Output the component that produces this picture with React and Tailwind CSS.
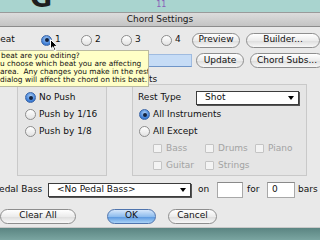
import React from "react";

const F = { fontFamily: '"DejaVu Sans", sans-serif' };

function Radio({ on }) {
  return on ? (
    <span className="w-[11px] h-[11px] rounded-full border border-[#3d67a8] bg-[radial-gradient(circle_at_50%_35%,#a9cdf5,#3a7bd5_70%,#2a5fb0)] flex items-center justify-center shrink-0">
      <span className="w-[4px] h-[4px] rounded-full bg-[#13233f]" />
    </span>
  ) : (
    <span className="w-[11px] h-[11px] rounded-full border border-[#8d8d8d] bg-[linear-gradient(#ffffff,#e2e2e2)] shrink-0" />
  );
}

function Check() {
  return <span className="w-[9px] h-[9px] rounded-[1px] border border-[#c4c4c4] bg-[#f3f3f3] shrink-0" />;
}

function Btn({ children, w, blue }) {
  return (
    <div
      className={
        "h-[15px] rounded-full flex items-center justify-center shrink-0 text-[9px] text-[#111] " +
        (blue
          ? "border border-[#4f74ad] bg-[linear-gradient(#d5e7fb,#8fbdee_50%,#5d9ae0_55%,#a9d2f7)]"
          : "border border-[#8e8e8e] bg-[linear-gradient(#ffffff,#ececec_50%,#dedede_55%,#f8f8f8)]")
      }
      style={{ width: w }}
    >
      {children}
    </div>
  );
}

function Select({ w, children }) {
  return (
    <div
      className="h-[14px] bg-white border border-[#3c3c3c] shadow-[1px_1px_0_#555] flex items-center justify-between pl-[8px] pr-[4px] text-[9px] text-[#111] shrink-0"
      style={{ width: w }}
    >
      <span>{children}</span>
      <span className="w-0 h-0 border-l-[3.5px] border-r-[3.5px] border-t-[4px] border-l-transparent border-r-transparent border-t-black" />
    </div>
  );
}

export default function App() {
  return (
    <div className="w-[320px] h-[240px] overflow-hidden relative flex flex-col bg-[#e9e9e9]" style={F}>
      {/* background app strip */}
      <div className="h-[12px] bg-[#a9d4cf] flex overflow-hidden shrink-0">
        <span className="ml-[30px] -mt-[16px] text-[27px] font-semibold leading-none text-[#1e1e1e]">G</span>
        <span className="ml-[104px] mt-[1px] text-[8px] leading-none text-[#8a5db8]">11</span>
      </div>
      {/* title bar */}
      <div className="h-[15px] shrink-0 bg-[linear-gradient(#dcdcdc,#c4c4c4)] border-t border-[#9a9a9a] border-b border-b-[#8c8c8c] flex items-center justify-center text-[9px] text-[#1a1a1a]">
        Chord Settings
      </div>
      {/* body */}
      <div className="flex-1 flex flex-col pt-[6px] text-[9px] text-[#111]">
        {/* row 1 */}
        <div className="flex items-center h-[14px]">
          <span className="w-[51px] -ml-[6px]">Beat</span>
          {["1", "2", "3", "4"].map((n, i) => (
            <div key={n} className="flex items-center gap-[3px] shrink-0" style={{ width: i === 3 ? 31 : 40 }}>
              <Radio on={i === 0} />
              <span>{n}</span>
            </div>
          ))}
          <Btn w={48}>Preview</Btn>
          <div className="w-[6px] shrink-0" />
          <Btn w={74}>Builder...</Btn>
        </div>
        {/* row 2 */}
        <div className="flex items-center h-[15px] mt-[6px]">
          <div className="ml-[45px] w-[147px] h-[13px] bg-[#c6dcf6] border border-[#9fbbe0] border-b-[#6f95c8] shrink-0" />
          <div className="w-[4px] shrink-0" />
          <Btn w={48}>Update</Btn>
          <div className="w-[6px] shrink-0" />
          <Btn w={74}>Chord Subs...</Btn>
        </div>
        {/* group boxes */}
        <div className="flex mt-[6px]">
          <div className="ml-[17px] w-[90px] flex flex-col">
            <div className="h-[10px]" />
            <div className="h-[92px] border border-[#c9c9c9] bg-[#e5e5e5] pt-[4px] pl-[7px] flex flex-col">
              {["No Push", "Push by 1/16", "Push by 1/8"].map((t, i) => (
                <div key={t} className="h-[17px] flex items-center gap-[3px]">
                  <Radio on={i === 0} />
                  <span>{t}</span>
                </div>
              ))}
            </div>
          </div>
          <div className="ml-[25px] w-[175px] flex flex-col">
            <div className="h-[10px] pl-[17px] leading-[10px]">ts</div>
            <div className="h-[92px] border border-[#c9c9c9] bg-[#e5e5e5] pt-[4px] pl-[6px] flex flex-col">
              <div className="h-[17px] flex items-center">
                <span className="w-[58px] -ml-[1px]">Rest Type</span>
                <Select w={103}>Shot</Select>
              </div>
              <div className="h-[17px] flex items-center gap-[3px]">
                <Radio on />
                <span>All Instruments</span>
              </div>
              <div className="h-[17px] flex items-center gap-[3px]">
                <Radio />
                <span>All Except</span>
              </div>
              <div className="h-[17px] flex items-center pl-[14px] text-[#a3a3a3]">
                <div className="w-[52px] flex items-center gap-[4px]"><Check /><span>Bass</span></div>
                <div className="w-[50px] flex items-center gap-[4px]"><Check /><span>Drums</span></div>
                <div className="flex items-center gap-[4px]"><Check /><span>Piano</span></div>
              </div>
              <div className="h-[17px] flex items-center pl-[14px] text-[#a3a3a3]">
                <div className="w-[52px] flex items-center gap-[4px]"><Check /><span>Guitar</span></div>
                <div className="flex items-center gap-[4px]"><Check /><span>Strings</span></div>
              </div>
            </div>
          </div>
        </div>
        {/* pedal bass row */}
        <div className="flex items-center h-[16px] mt-[6px]">
          <span className="w-[54px] -ml-[6px] shrink-0">Pedal Bass</span>
          <Select w={143}>&lt;No Pedal Bass&gt;</Select>
          <span className="ml-[7px] w-[19px] shrink-0">on</span>
          <div className="w-[26px] h-[16px] bg-white border border-[#a8a8a8] border-t-[#8a8a8a] shrink-0" />
          <span className="ml-[4px] w-[20px] shrink-0">for</span>
          <div className="w-[28px] h-[16px] bg-white border border-[#a8a8a8] border-t-[#8a8a8a] pl-[4px] flex items-center shrink-0">0</div>
          <span className="ml-[3px]">bars</span>
        </div>
        {/* buttons */}
        <div className="flex items-center h-[16px] mt-[10px]">
          <Btn w={76}>Clear All</Btn>
          <div className="w-[31px] shrink-0" />
          <Btn w={49} blue>OK</Btn>
          <div className="w-[12px] shrink-0" />
          <Btn w={49}>Cancel</Btn>
        </div>
      </div>
      {/* bottom background */}
      <div className="h-[13px] shrink-0 bg-[linear-gradient(#5b8582,#7aa5a1)] border-t border-[#c8c8c8]" />

      {/* tooltip overlay */}
      <div className="absolute left-0 top-[50px] w-[149px] h-[37px] bg-[#ffffc6] border border-[#b9b9a0] border-l-0 pt-[1px] text-[7.4px] leading-[8px] text-[#111] whitespace-nowrap overflow-hidden">
        <div className="pl-[1px]">beat are you editing?</div>
        <div>u choose which beat you are affecting</div>
        <div>area.&nbsp; Any changes you make in the rest</div>
        <div>dialog will affect the chord on this beat.</div>
      </div>

      {/* mouse cursor */}
      <svg className="absolute left-[50px] top-[39px]" width="9" height="13" viewBox="0 0 9 13">
        <path d="M0.5 0.5 L0.5 10 L2.8 7.8 L4.6 12 L6 11.4 L4.3 7.3 L7.5 7.3 Z" fill="#000" stroke="#fff" strokeWidth="1" />
      </svg>
    </div>
  );
}
